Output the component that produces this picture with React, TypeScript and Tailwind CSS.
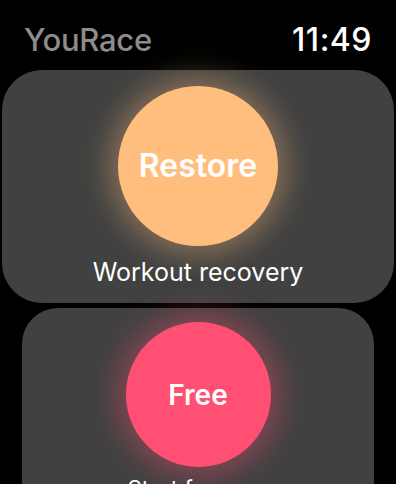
import React from "react";

function ModeCard({
  label,
  caption,
  color,
  glow,
  small = false
}: {
  label: string;
  caption: string;
  color: string;
  glow: string;
  small?: boolean;
}) {
  return (
    <div
      className={
        small
          ? "mx-auto flex w-[352px] flex-col items-center rounded-[36px] bg-[#414141] pt-[14px] pb-[16px]"
          : "mx-auto flex w-[392px] flex-col items-center rounded-[40px] bg-[#414141] pt-[16px] pb-[16px]"
      }
    >
      <div
        className={
          small
            ? "flex h-[145px] w-[145px] items-center justify-center rounded-full"
            : "flex h-[160px] w-[160px] items-center justify-center rounded-full"
        }
        style={{ backgroundColor: color, boxShadow: `0 0 30px 8px ${glow}` }}
      >
        <span
          className={
            small
              ? "text-[28px] font-semibold text-white"
              : "text-[32px] font-semibold text-white"
          }
        >
          {label}
        </span>
      </div>
      <p
        className={
          small
            ? "mt-[8px] text-[22.5px] leading-[27px] text-white"
            : "mt-[11px] text-[25px] leading-[30px] text-white"
        }
      >
        {caption}
      </p>
    </div>
  );
}

export default function App() {
  return (
    <div className="h-[484px] w-[396px] overflow-hidden bg-black [font-family:Inter,'Open_Sans',sans-serif]">
      <header className="flex h-[70px] items-end justify-between px-[24px] pb-[11px]">
        <span className="text-[31px] leading-[38px] font-medium tracking-[-0.3px] text-[#8c8c8c]">
          YouRace
        </span>
        <span className="text-[32px] leading-[38px] font-medium tracking-[0.5px] text-white">11:49</span>
      </header>
      <div className="flex flex-col gap-[5px]">
        <ModeCard
          label="Restore"
          caption="Workout recovery"
          color="#ffbe7d"
          glow="rgba(255,190,125,0.4)"
        />
        <ModeCard
          label="Free"
          caption="Start free run"
          color="#ff5073"
          glow="rgba(255,80,115,0.4)"
          small
        />
      </div>
    </div>
  );
}
